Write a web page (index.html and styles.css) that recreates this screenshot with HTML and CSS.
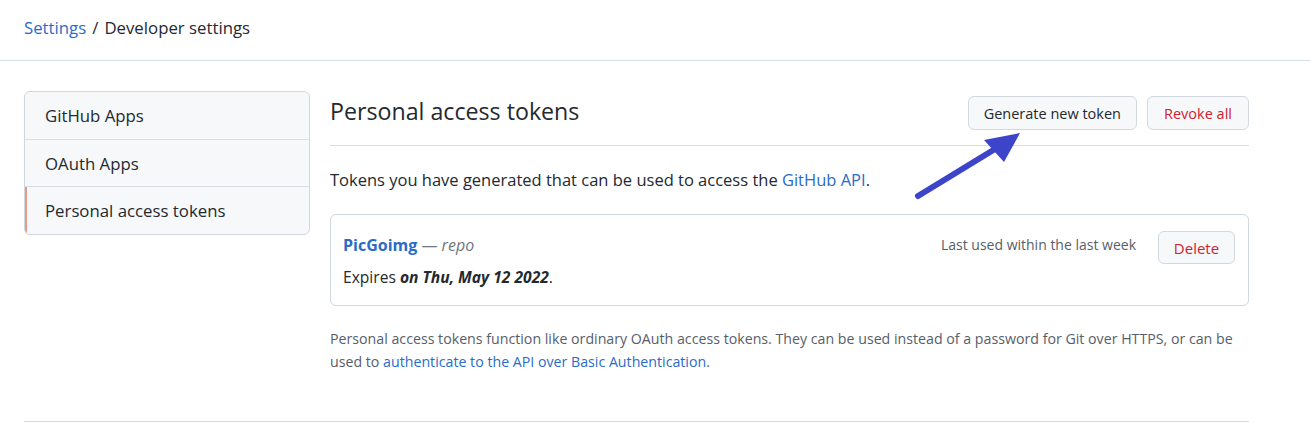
FILE: index.html
```html
<!DOCTYPE html>
<html lang="en">
<head>
<meta charset="utf-8">
<title>Personal access tokens</title>
<link rel="stylesheet" href="styles.css">
</head>
<body>
<header class="topbar">
  <nav class="breadcrumb"><a href="#" class="link">Settings</a><span class="sep">/</span><span class="crumb">Developer settings</span></nav>
</header>
<div class="layout">
  <div class="columns">
    <aside class="menu">
      <a href="#" class="menu-item">GitHub Apps</a>
      <a href="#" class="menu-item">OAuth Apps</a>
      <a href="#" class="menu-item selected">Personal access tokens</a>
    </aside>
    <main class="main">
      <div class="subhead">
        <h2 class="subhead-title">Personal access tokens</h2>
        <div class="subhead-actions">
          <a href="#" class="btn">Generate new token</a>
          <a href="#" class="btn btn-danger">Revoke all</a>
        </div>
      </div>
      <p class="intro">Tokens you have generated that can be used to access the <a href="#" class="link">GitHub API</a>.</p>
      <div class="token-box">
        <div class="token-info">
          <div class="token-name"><a href="#" class="link strong">PicGoimg</a> <span class="muted">— <em>repo</em></span></div>
          <div class="token-expiry">Expires <em class="strong">on Thu, May 12 2022</em>.</div>
        </div>
        <div class="token-meta">
          <span class="last-used">Last used within the last week</span>
          <a href="#" class="btn btn-danger btn-sm">Delete</a>
        </div>
      </div>
      <p class="note">Personal access tokens function like ordinary OAuth access tokens. They can be used instead of a password for Git over HTTPS, or can be used to <a href="#" class="link">authenticate to the API over Basic Authentication</a>.</p>
    </main>
  </div>
  <div class="footer-rule"></div>
</div>
<svg class="annotation" width="140" height="90" viewBox="0 0 140 90" aria-hidden="true">
  <line x1="18" y1="76" x2="95" y2="29" stroke="#3c44c9" stroke-width="6" stroke-linecap="round"/>
  <polygon points="120,13 84,20 104,42" fill="#3c44c9"/>
</svg>
</body>
</html>
```
FILE: styles.css
```css
* { box-sizing: border-box; }
html, body { margin: 0; padding: 0; background: #fff; }
body {
  font-family: "Open Sans", "Noto Sans", sans-serif;
  color: #24292f;
  position: relative;
  width: 1310px;
  height: 423px;
  overflow: hidden;
}
a { text-decoration: none; }
.link { color: #2a6cc7; }
.strong { font-weight: 700; }

.topbar {
  height: 61px;
  border-bottom: 1px solid #d8dee4;
  padding: 0 24px;
  display: flex;
  align-items: center;
}
.breadcrumb { font-size: 16.8px; line-height: 24px; margin-top: -4px; }
.breadcrumb .sep { margin: 0 6px; color: #24292f; }
.crumb { color: #24292f; }

.layout { width: 1249px; padding-left: 24px; }
.columns { display: flex; gap: 20px; margin-top: 30px; }

.menu {
  width: 286px;
  flex: none;
  align-self: flex-start;
  background: #f6f8fa;
  border: 1px solid #d0d7de;
  border-radius: 6px;
  overflow: hidden;
  display: flex;
  flex-direction: column;
}
.menu-item {
  display: block;
  height: 47px;
  line-height: 47px;
  padding-left: 20px;
  font-size: 16.8px;
  color: #24292f;
  border-top: 1px solid #d8dee4;
}
.menu-item:first-child { border-top: 0; }
.menu-item.selected { box-shadow: inset 2px 0 0 #e59a86; height: 48px; line-height: 48px; }

.main { flex: 1; min-width: 0; }
.subhead {
  display: flex;
  align-items: center;
  justify-content: space-between;
  padding-top: 5px;
  padding-bottom: 15px;
  border-bottom: 1px solid #d8dee4;
}
.subhead-title { margin: -4px 0 0; font-size: 23.2px; font-weight: 400; line-height: 32px; }
.subhead-actions { display: flex; gap: 10px; }

.btn {
  display: inline-flex;
  align-items: center;
  justify-content: center;
  height: 34px;
  padding: 0 15px;
  font-size: 14.5px;
  font-weight: 500;
  color: #24292f;
  background: #f6f8fa;
  border: 1px solid #d3d8de;
  border-radius: 6px;
}
.btn-danger { color: #cf222e; }
.subhead-actions .btn-danger { width: 102px; }
.btn-sm { height: 33px; width: 77px; font-size: 15px; padding: 0; }

.intro { margin: 22px 0 0; font-size: 16.5px; line-height: 24px; }

.token-box {
  margin-top: 22px;
  border: 1px solid #d0d7de;
  border-radius: 6px;
  padding: 15px 13px 15px 12px;
  display: flex;
  justify-content: space-between;
  align-items: flex-start;
}
.token-name { font-size: 16px; line-height: 30px; }
.token-name .muted { color: #6e7781; }
.token-expiry { margin-top: 4px; font-size: 15.6px; line-height: 26px; }
.token-meta { display: flex; align-items: flex-start; gap: 22px; }
.last-used { font-size: 14px; line-height: 30px; color: #57606a; }
.token-meta .btn { margin-top: 1px; }

.note {
  margin: 21px 0 0;
  font-size: 14.2px;
  line-height: 23px;
  color: #57606a;
}

.footer-rule {
  margin-top: 48px;
  border-top: 1px solid #d8dee4;
}

.annotation { position: absolute; left: 900px; top: 120px; }
```
